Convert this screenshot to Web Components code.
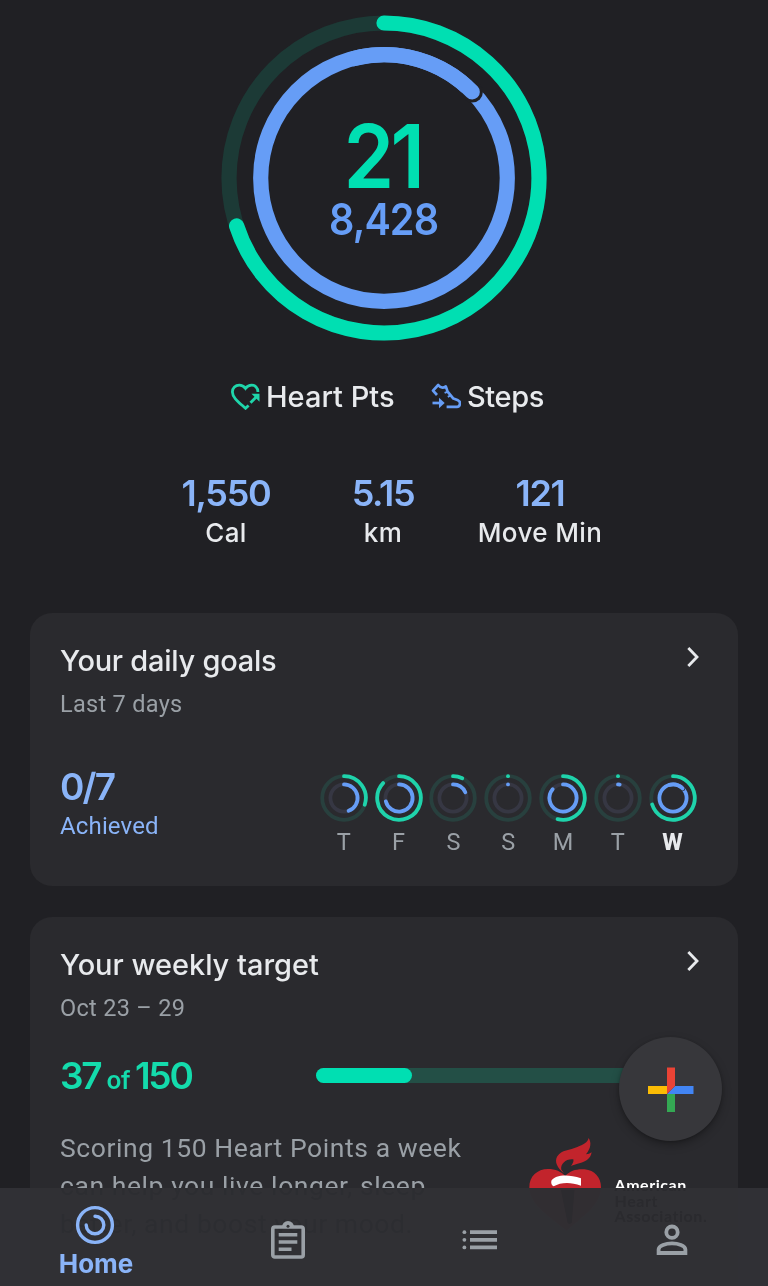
<!DOCTYPE html>
<html lang="en">
<head>
<meta charset="utf-8">
<meta name="viewport" content="width=device-width, initial-scale=1">
<title>Fit</title>
<style>
  :root {
    --bg: #202024;
    --card: #2a2a2e;
    --green: #00dfb2;
    --blue: #669df6;
    --blue-light: #8ab4f8;
    --text: #e8eaed;
    --text-soft: #9aa0a6;
    --font-display: Inter, "Open Sans", sans-serif;
    --font-body: Roboto, "Noto Sans", sans-serif;
  }

  body {
    margin: 0;
    background: var(--bg);
    color: var(--text);
    font-family: var(--font-display);
  }
</style>
</head>
<body>
<fit-app></fit-app>

<script>
const arc = (r, from, to) => {
  const p = (deg) => {
    const a = (deg - 90) * Math.PI / 180;
    return `${(r * Math.cos(a)).toFixed(2)} ${(r * Math.sin(a)).toFixed(2)}`;
  };
  const large = to - from > 180 ? 1 : 0;
  return `M${p(from)} A${r} ${r} 0 ${large} 1 ${p(to)}`;
};

/* Two concentric progress rings: heart points outside, steps inside */
class FitRings extends HTMLElement {
  constructor() {
    super();
    this.attachShadow({ mode: 'open' });
  }

  connectedCallback() {
    const num = (name) => Number(this.getAttribute(name));
    const size = num('size');
    const stroke = num('stroke');
    const outer = num('r1');
    const inner = num('r2');
    const points = Math.max(num('points') * 360, 0.1);
    const steps = Math.max(num('steps') * 360, 0.1);

    let stepsMarkup = `
      <circle class="track-steps" r="${inner}" />
      <path class="steps" d="${arc(inner, 0, Math.min(steps, 359.9))}" />`;

    /* Past a full turn the ring overlaps itself, with a thin gap at its head */
    if (steps > 360) {
      const head = steps - 360;
      const a = (head - 90) * Math.PI / 180;
      stepsMarkup = `
        <circle class="steps" r="${inner}" />
        <circle class="gap" r="${stroke * 0.5 + num('gap')}"
          cx="${inner * Math.cos(a)}" cy="${inner * Math.sin(a)}" />
        <path class="steps" d="${arc(inner, head - 60, head)}" />`;
    }

    this.shadowRoot.innerHTML = `
      <style>
        :host { display: grid; place-items: center; }
        svg { display: block; grid-area: 1 / 1; }
        ::slotted(*) { grid-area: 1 / 1; }
        circle, path { fill: none; stroke-width: ${stroke}; stroke-linecap: round; }
        .track-points { stroke: var(--track-points, #1c3a36); }
        .track-steps { stroke: var(--track-steps, #363743); }
        .points { stroke: var(--ring-points, var(--green)); }
        .steps { stroke: var(--blue); }
        circle.gap { fill: var(--ring-gap, var(--bg)); stroke: none; }
      </style>
      <svg width="${size}" height="${size}" viewBox="${-size / 2} ${-size / 2} ${size} ${size}">
        <circle class="track-points" r="${outer}" />
        <path class="points" d="${arc(outer, 0, points)}" />
        ${stepsMarkup}
      </svg>
      <slot></slot>
    `;
  }
}

class FitLegend extends HTMLElement {
  constructor() {
    super();
    this.attachShadow({ mode: 'open' });
    this.shadowRoot.innerHTML = `
      <style>
        :host {
          display: flex;
          align-items: center;
          gap: 6px;
          height: 28px;
          font-size: 29px;
          font-weight: 500;
          line-height: 0.728;
          white-space: nowrap;
        }
        span { padding-top: 1.5px; }
      </style>
      <slot name="icon"></slot>
      <span><slot></slot></span>
    `;
  }
}

class FitStat extends HTMLElement {
  constructor() {
    super();
    this.attachShadow({ mode: 'open' });
    this.shadowRoot.innerHTML = `
      <style>
        :host {
          display: flex;
          flex-direction: column;
          align-items: center;
          gap: 17.5px;
          line-height: 0.728;
          white-space: nowrap;
        }
        .value {
          font-size: 36px;
          font-weight: 600;
          letter-spacing: -1.3px;
          color: var(--blue-light);
        }
        .label { font-size: 26px; letter-spacing: 0.4px; font-weight: 450; }
      </style>
      <div class="value"><slot name="value"></slot></div>
      <div class="label"><slot></slot></div>
    `;
  }
}

class FitCard extends HTMLElement {
  constructor() {
    super();
    this.attachShadow({ mode: 'open' });
    this.shadowRoot.innerHTML = `
      <style>
        :host {
          display: block;
          box-sizing: border-box;
          margin: 0 30px;
          padding: 37px 30px 0;
          border-radius: 22px;
          background: var(--card);
        }
        header {
          display: flex;
          justify-content: space-between;
          align-items: flex-start;
          height: 21px;
          padding-right: 8px;
        }
        .title {
          font-size: 29px;
          font-weight: 500;
          line-height: 0.728;
          letter-spacing: var(--title-spacing, -0.25px);
        }
        .sub {
          margin-top: 25px;
          font: 23.5px/0.711 var(--font-body);
          letter-spacing: 0.3px;
          color: var(--text-soft);
        }
        svg { display: block; margin-top: -4px; }
      </style>
      <header>
        <div class="title"><slot name="title"></slot></div>
        <svg width="14" height="22" viewBox="0 0 14 22">
          <path d="M2.3 2 L11 11 L2.3 20" fill="none" stroke="#e8eaed" stroke-width="2.8" />
        </svg>
      </header>
      <div class="sub"><slot name="sub"></slot></div>
      <slot></slot>
    `;
  }
}

class FitDay extends HTMLElement {
  constructor() {
    super();
    this.attachShadow({ mode: 'open' });
  }

  connectedCallback() {
    this.shadowRoot.innerHTML = `
      <style>
        :host {
          display: flex;
          flex-direction: column;
          align-items: center;
          gap: 11.5px;
          width: 54.8px;
          font: 23.5px/0.711 var(--font-body);
          color: var(--text-soft);
        }
        :host([today]) { color: var(--text); font-weight: 800; }
        fit-rings {
          --track-points: #28403e;
          --ring-points: #1fd3ab;
          --ring-gap: var(--card);
        }
      </style>
      <fit-rings size="48" stroke="3.8" r1="21.8" r2="13.6" gap="0.6"
        points="${this.getAttribute('points')}"
        steps="${this.getAttribute('steps')}"></fit-rings>
      <span><slot></slot></span>
    `;
  }
}

class FitProgress extends HTMLElement {
  constructor() {
    super();
    this.attachShadow({ mode: 'open' });
  }

  connectedCallback() {
    this.shadowRoot.innerHTML = `
      <style>
        :host {
          display: block;
          height: 15px;
          border-radius: 8px;
          background: #234f46;
        }
        div {
          width: ${this.getAttribute('value')}%;
          height: 100%;
          border-radius: 8px;
          background: var(--green);
        }
      </style>
      <div></div>
    `;
  }
}

class FitFab extends HTMLElement {
  constructor() {
    super();
    this.attachShadow({ mode: 'open' });
    this.shadowRoot.innerHTML = `
      <style>
        :host {
          display: grid;
          place-items: center;
          box-sizing: border-box;
          width: 103px;
          height: 104px;
          padding-top: 1px;
          border-radius: 50%;
          background: #37373b;
          box-shadow: 0 4px 10px rgba(0, 0, 0, 0.28), 0 1px 3px rgba(0, 0, 0, 0.2);
        }
      </style>
      <svg width="46" height="46" viewBox="0 0 46 46">
        <path fill="#fbbc04" d="M0 19h19v8H0z" />
        <path fill="#34a853" d="M19 27h8v18h-8z" />
        <path fill="#4285f4" d="M27 19h18.5v8H19z" />
        <path fill="#ea4335" d="M19 .5h8V19l-8 8z" />
      </svg>
    `;
  }
}

class HeartAssociation extends HTMLElement {
  constructor() {
    super();
    this.attachShadow({ mode: 'open' });
    this.shadowRoot.innerHTML = `
      <style>
        :host { display: flex; gap: 12.5px; }
        p {
          margin: 40px 0 0;
          font: 700 16px/15.3px Lato, sans-serif;
          letter-spacing: 0.55px;
          color: #fff;
        }
      </style>
      <svg width="74" height="97" viewBox="24 24 222 291">
        <path fill="#c2242c" d="M132 133 C112 118 102 98 112 82 C124 62 150 64 172 54 C190 47 203 40 206 27 C214 40 214 56 198 76 C204 76 210 74 215 70 C212 88 200 97 178 103 C166 106 160 108 153 112 C158 104 162 98 160 91 C140 88 120 104 124 122 Z" />
        <path fill="#c2242c" d="M136 141 C150 124 172 119 194 121 C224 124 243 146 243 174 C243 222 205 250 140 305 C70 250 28 222 28 174 C28 142 52 120 84 120 C106 120 124 128 136 141 Z" />
        <path fill="#fff" d="M94 155 C106 138 142 134 183 148 V170 C150 158 122 160 101 172 Q92 168 94 155 Z" />
        <path fill="#fff" fill-opacity="0.7" d="M122 182 h42 l-8 98 q-8 12 -14 0 Z" />
      </svg>
      <p>American<br>Heart<br>Association.</p>
    `;
  }
}

class FitNav extends HTMLElement {
  constructor() {
    super();
    this.attachShadow({ mode: 'open' });
    this.shadowRoot.innerHTML = `
      <style>
        :host {
          display: grid;
          grid-template-columns: repeat(4, 1fr);
          justify-items: center;
          height: 98.5px;
          background: rgba(43, 43, 47, 0.972);
          -webkit-backdrop-filter: invert(1) hue-rotate(180deg) blur(0.6px);
          backdrop-filter: invert(1) hue-rotate(180deg) blur(0.6px);
          color: var(--text-soft);
        }
        .item {
          display: flex;
          flex-direction: column;
          align-items: center;
        }
        .item.active { color: var(--blue-light); padding-top: 17px; }
        .active svg { margin-right: 1.5px; }
        .label {
          margin-top: 10.5px;
          font-size: 26px;
          font-weight: 700;
          line-height: 0.728;
        }
        svg { display: block; }
      </style>
      <div class="item active">
        <svg width="40" height="40" viewBox="-20 -20 40 40" fill="none" stroke="currentColor" stroke-width="3.4">
          <circle r="17.4" />
          <path d="M0 -8.8 A8.8 8.8 0 1 1 -8.8 0" stroke-linecap="round" />
        </svg>
        <span class="label">Home</span>
      </div>
      <div class="item">
        <svg width="36" height="40" viewBox="0 0 36 40" style="margin-top: 32px" fill="none" stroke="currentColor">
          <rect x="2.8" y="7" width="30.4" height="30" rx="2" stroke-width="3.6" />
          <path d="M12 7 a6 6 0 0 1 12 0 z" fill="currentColor" stroke="none" />
          <circle cx="18" cy="6.2" r="1.5" fill="#303034" stroke="none" />
          <path d="M8.7 14.7 H27.3 M8.7 22 H27.3 M8.7 29.3 H21.5" stroke-width="3.6" />
        </svg>
      </div>
      <div class="item">
        <svg width="36" height="22" viewBox="0 0 36 22" style="margin-top: 41.5px" fill="currentColor">
          <circle cx="2.4" cy="3.2" r="1.9" /><circle cx="2.4" cy="10.8" r="1.9" /><circle cx="2.4" cy="18.4" r="1.9" />
          <path d="M8 1.3h27v3.8H8zM8 8.9h27v3.8H8zM8 16.5h27v3.8H8z" />
        </svg>
      </div>
      <div class="item">
        <svg width="32" height="32" viewBox="0 0 32 32" style="margin-top: 36px" fill="none" stroke="currentColor" stroke-width="3.8">
          <circle cx="16" cy="8.2" r="5.7" />
          <path d="M2.6 29 V25.5 C2.6 21.5 10 19.3 16 19.3 C22 19.3 29.4 21.5 29.4 25.5 V29 Z" />
        </svg>
      </div>
    `;
  }
}

class FitApp extends HTMLElement {
  constructor() {
    super();
    this.attachShadow({ mode: 'open' });
    this.shadowRoot.innerHTML = `
      <style>
        :host {
          display: block;
          position: relative;
          height: 1286px;
          overflow: hidden;
        }
        .hero { padding-top: 15px; height: 326px; }
        .totals {
          display: flex;
          flex-direction: column;
          align-items: center;
          gap: 15px;
          padding-top: 3px;
          line-height: 0.728;
        }
        .points {
          font-size: 88.5px;
          font-weight: 600;
          letter-spacing: -4px;
          margin-right: 3px;
          transform: scaleX(0.92);
          color: var(--green);
        }
        .steps {
          font-size: 44px;
          font-weight: 600;
          letter-spacing: -1px;
          transform: scaleX(0.9);
          color: var(--blue);
        }
        .legend {
          display: grid;
          grid-template-columns: 201px auto;
          justify-content: start;
          margin-top: 41px;
          padding-left: 230px;
        }
        .legend .walk { letter-spacing: -0.4px; }
        .stats {
          display: grid;
          grid-template-columns: repeat(3, 157px);
          justify-content: center;
          margin: 70px 2px 70px 0;
        }
        .goals { height: 273px; margin-bottom: 31px; }
        .target { height: 420px; --title-spacing: -0.03px; }
        .row { display: flex; justify-content: space-between; }
        .goals .row { margin-top: 62px; padding-right: 8px; }
        .achieved {
          display: flex;
          flex-direction: column;
          gap: 17px;
          color: var(--blue-light);
        }
        .big { font-size: 37px; font-weight: 600; line-height: 0.728; letter-spacing: -1.9px; }
        .achieved span { font: 24px/0.711 var(--font-body); letter-spacing: 0.15px; }
        .days { display: flex; }
        .target .score { margin-top: 46px; align-items: flex-start; }
        .score .big { padding-top: 1px; color: #14dbac; white-space: nowrap; letter-spacing: -2.2px; }
        .score small { font-size: 24.5px; letter-spacing: -0.5px; margin: 0 5px 0 6px; }
        fit-progress { width: 392px; margin-top: 5.5px; }
        .about { margin-top: 39px; }
        .about p {
          width: 430px;
          margin: 0;
          font: 26.5px/38px var(--font-body);
          letter-spacing: 0.57px;
          color: var(--text-soft);
        }
        heart-association { margin: 8px 0 0; width: 180px; }
        fit-fab { position: absolute; left: 619px; top: 1037px; }
        fit-nav { position: absolute; left: 0; right: 0; bottom: 0; }
      </style>

      <section class="hero">
        <fit-rings size="326" stroke="15.2" r1="155" r2="123.3" gap="3" points="0.7" steps="1.127">
          <div class="totals">
            <div class="points">21</div>
            <div class="steps">8,428</div>
          </div>
        </fit-rings>
      </section>

      <section class="legend">
        <fit-legend>
          <svg slot="icon" width="30" height="28" viewBox="0 0 30 28" fill="none" stroke="#1fd6ab" stroke-width="2.8">
            <path d="M27.9 10 C28 5.5 25 3.2 21.7 3.2 C19 3.2 17 4.5 15.5 6.4 C14 4.5 12 3.2 9.3 3.2 C5.5 3.2 2.4 6 2.4 10 C2.4 15.5 8.5 20 15.5 26.3 L18.6 23.4" />
            <path d="M20.5 20.7 L27 14.2" />
            <path d="M21.5 11.7 H29.5 V19.7 Z" fill="#1fd6ab" stroke="none" />
          </svg>
          Heart Pts
        </fit-legend>
        <fit-legend class="walk">
          <svg slot="icon" width="30" height="28" viewBox="0 0 30 28" fill="none" stroke="#669df6" stroke-width="2.7">
            <path d="M6 13 L2 8.6 L7.2 3 Q10.5 7.4 14.8 4.4 L16.6 9.6 L22.4 16.6 L27 18.3 Q30 20 28.6 23 Q28 24.8 26 24.8 H15.6" stroke-linejoin="round" />
            <path d="M13.6 10.9 L17 9.6 M16.8 14.8 L20 13.2" stroke-width="2" />
            <path d="M1.5 21 H9" stroke-width="2.7" />
            <path d="M8 15.8 L13.7 21 L8 26.3 Z" fill="#669df6" stroke="none" />
          </svg>
          Steps
        </fit-legend>
      </section>

      <section class="stats">
        <fit-stat><span slot="value">1,550</span>Cal</fit-stat>
        <fit-stat><span slot="value">5.15</span>km</fit-stat>
        <fit-stat><span slot="value">121</span>Move Min</fit-stat>
      </section>

      <fit-card class="goals">
        <span slot="title">Your daily goals</span>
        <span slot="sub">Last 7 days</span>
        <div class="row">
          <div class="achieved">
            <div class="big">0/7</div>
            <span>Achieved</span>
          </div>
          <div class="days">
            <fit-day points="0.3" steps="0.445">T</fit-day>
            <fit-day points="0.87" steps="0.71">F</fit-day>
            <fit-day points="0.07" steps="0.18">S</fit-day>
            <fit-day points="0" steps="0">S</fit-day>
            <fit-day points="0.54" steps="0.863">M</fit-day>
            <fit-day points="0" steps="0.02">T</fit-day>
            <fit-day points="0.702" steps="1.125" today>W</fit-day>
          </div>
        </div>
      </fit-card>

      <fit-card class="target">
        <span slot="title">Your weekly target</span>
        <span slot="sub">Oct 23 – 29</span>
        <div class="row score">
          <div class="big">37<small>of</small>150</div>
          <fit-progress value="24.6"></fit-progress>
        </div>
        <div class="row about">
          <p>Scoring 150 Heart Points a week can help you live longer, sleep better, and boost your mood.</p>
          <heart-association></heart-association>
        </div>
      </fit-card>

      <fit-fab></fit-fab>
      <fit-nav></fit-nav>
    `;
  }
}

customElements.define('fit-rings', FitRings);
customElements.define('fit-legend', FitLegend);
customElements.define('fit-stat', FitStat);
customElements.define('fit-card', FitCard);
customElements.define('fit-day', FitDay);
customElements.define('fit-progress', FitProgress);
customElements.define('fit-fab', FitFab);
customElements.define('heart-association', HeartAssociation);
customElements.define('fit-nav', FitNav);
customElements.define('fit-app', FitApp);
</script>
</body>
</html>
